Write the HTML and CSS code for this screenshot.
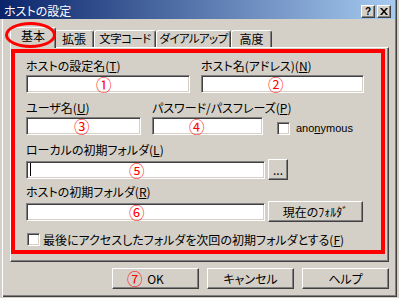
FILE: index.html
```html
<!DOCTYPE html>
<html lang="ja">
<head>
  <meta charset="UTF-8">
  <title>ホストの設定</title>
  <link rel="stylesheet" href="styles.css">
</head>
<body>
  <div class="window">
    <div class="titlebar">
      <span class="title">ホストの設定</span>
      <div class="caption">
        <span class="cap-btn">?</span>
        <span class="cap-btn">
          <svg width="8" height="7" viewBox="0 0 8 7"><path d="M0 0h2l2 2.5L6 0h2L5 3.5 8 7H6L4 4.5 2 7H0l3-3.5z" fill="#000"/></svg>
        </span>
      </div>
    </div>
    <div class="body">
      <div class="tabs">
        <span class="tab active t-basic">基本</span>
        <span class="tab t-ext">拡張</span>
        <span class="tab t-code">文字コード</span>
        <span class="tab t-dial">ダイアルアップ</span>
        <span class="tab t-adv">高度</span>
        <span class="tab-mark"></span>
      </div>
      <div class="panel">
        <div class="mark-box">
          <div class="row">
            <div class="field w-name">
              <label>ホストの設定名(<u>T</u>)</label>
              <div class="edit"><span class="num n1">①</span></div>
            </div>
            <div class="field w-host">
              <label>ホスト名(アドレス)(<u>N</u>)</label>
              <div class="edit"><span class="num n2">②</span></div>
            </div>
          </div>
          <div class="row">
            <div class="field w-user">
              <label>ユーザ名(<u>U</u>)</label>
              <div class="edit"><span class="num n3">③</span></div>
            </div>
            <div class="field w-pass">
              <label>パスワード/パスフレーズ(<u>P</u>)</label>
              <div class="edit"><span class="num n4">④</span></div>
            </div>
            <div class="anon">
              <span class="check"></span>
              <span>ano<u>n</u>ymous</span>
            </div>
          </div>
          <div class="row">
            <div class="field">
              <label>ローカルの初期フォルダ(<u>L</u>)</label>
              <div class="inline">
                <div class="edit w-folder"><span class="caret"></span><span class="num n5">⑤</span></div>
                <span class="btn btn-dots">...</span>
              </div>
            </div>
          </div>
          <div class="row row-host">
            <div class="field">
              <label>ホストの初期フォルダ(<u>R</u>)</label>
              <div class="inline">
                <div class="edit w-folder"><span class="num n6">⑥</span></div>
                <span class="btn btn-cur">現在のﾌｫﾙﾀﾞ</span>
              </div>
            </div>
          </div>
          <div class="check-row">
            <span class="check"></span>
            <span>最後にアクセスしたフォルダを次回の初期フォルダとする(<u>F</u>)</span>
          </div>
        </div>
      </div>
      <div class="actions">
        <span class="btn"><span class="num n7">⑦</span>OK</span>
        <span class="btn">キャンセル</span>
        <span class="btn">ヘルプ</span>
      </div>
    </div>
  </div>
</body>
</html>
```

FILE: styles.css
```css
body { margin: 0; background: #d4d0c8; color: #000; font-family: "Noto Sans CJK JP", sans-serif; font-size: 12px; font-feature-settings: "palt"; }
u { text-decoration: underline; }

.window { width: 397px; height: 297px; box-sizing: border-box; box-shadow: inset 2px 0 #d4d0c8, inset 3px 0 #fff, inset -1px -1px #404040, inset -2px -2px #808080; }

.titlebar { height: 19px; margin-right: 2px; padding: 0 4px; display: flex; align-items: center; justify-content: space-between; background: linear-gradient(to right, #0a246a, #a6caf0); color: #fff; }
.title { padding-top: 2px; line-height: 14px; }
.caption { display: flex; gap: 2px; margin-top: 3px; }
.cap-btn { width: 14px; height: 13px; box-sizing: border-box; display: flex; align-items: center; justify-content: center; background: #d4d0c8; border: 1px solid; border-color: #fff #404040 #404040 #fff; box-shadow: inset -1px -1px #808080; font: bold 10px "Liberation Sans", sans-serif; color: #000; }

.body { padding: 0 8px 0 10px; }

.tabs { position: relative; height: 28px; display: flex; align-items: flex-end; padding-left: 2px; }
.tab { height: 17px; box-sizing: border-box; line-height: 15px; text-align: center; white-space: nowrap; font-size: 11.5px; letter-spacing: -0.6px; border: 1px solid #fff; border-bottom: 0; border-right-color: #404040; border-radius: 3px 3px 0 0; box-shadow: inset -1px 0 #808080; }
.tab.active { height: 21px; margin: 0 -2px -1px; position: relative; z-index: 1; background: #d4d0c8; letter-spacing: 0; font-size: 12px; }
.t-basic { width: 42px; }
.tab.active.t-basic { width: 46px; }
.t-ext { width: 40px; letter-spacing: 0; font-size: 12px; }
.t-code { width: 62px; }
.t-dial { width: 75px; }
.t-adv { width: 41px; letter-spacing: 0; font-size: 12px; }
.tab-mark { position: absolute; left: -5px; top: 3px; width: 51px; height: 26px; box-sizing: border-box; border: 3px solid #f00; border-radius: 50%; z-index: 2; }

.panel { height: 215px; box-sizing: border-box; padding: 1px 3px 0 0; border: 1px solid; border-color: #fff #404040 #404040 #fff; box-shadow: inset -1px -1px #808080; }
.mark-box { border: 4px solid #f00; padding: 5px 0 3px 11px; }

.row { display: flex; gap: 11px; margin-top: 7px; }
.row:first-child { margin-top: 0; }
.row-host { margin-top: 4px; }
.field label { display: block; line-height: 15px; margin-bottom: 2px; white-space: nowrap; }
.w-name { width: 164px; }
.w-host { width: 163px; }
.w-user { width: 115px; }
.w-pass { width: 111px; }
.w-folder { width: 239px; }

.edit { position: relative; height: 18px; box-sizing: border-box; display: flex; align-items: center; background: #fff; border: 1px solid; border-color: #808080 #fff #fff #808080; box-shadow: inset 1px 1px #404040, inset -1px -1px #d4d0c8; }
.caret { height: 13px; margin-left: 3px; border-left: 1px solid #000; }

.num { position: absolute; top: 1px; color: #f00; font-size: 15.5px; line-height: 14px; }
.n1 { left: 69px; }
.n2 { left: 66px; }
.n3 { left: 47px; }
.n4 { left: 36px; }
.n5, .n6 { left: 102px; }
.n7 { left: 14px; top: 2px; }

.check { flex: none; width: 13px; height: 13px; box-sizing: border-box; background: #fff; border: 1px solid; border-color: #808080 #fff #fff #808080; box-shadow: inset 1px 1px #404040, inset -1px -1px #d4d0c8; }
.anon { display: flex; align-items: center; gap: 6px; height: 18px; align-self: flex-end; margin: 0 0 -2px 3px; font: 11px "Liberation Sans", sans-serif; }
.check-row { display: flex; align-items: center; gap: 3px; line-height: 15px; margin: 10px 0 0 1px; }

.inline { display: flex; align-items: center; gap: 3px; }
.btn { position: relative; height: 21px; box-sizing: border-box; display: flex; align-items: center; justify-content: center; white-space: nowrap; border: 1px solid; border-color: #fff #404040 #404040 #fff; box-shadow: inset -1px -1px #808080; }
.btn-dots { width: 20px; }
.btn-cur { width: 95px; }

.actions { display: flex; justify-content: flex-end; gap: 8px; margin-top: 6px; }
.actions .btn { width: 87px; }
```
